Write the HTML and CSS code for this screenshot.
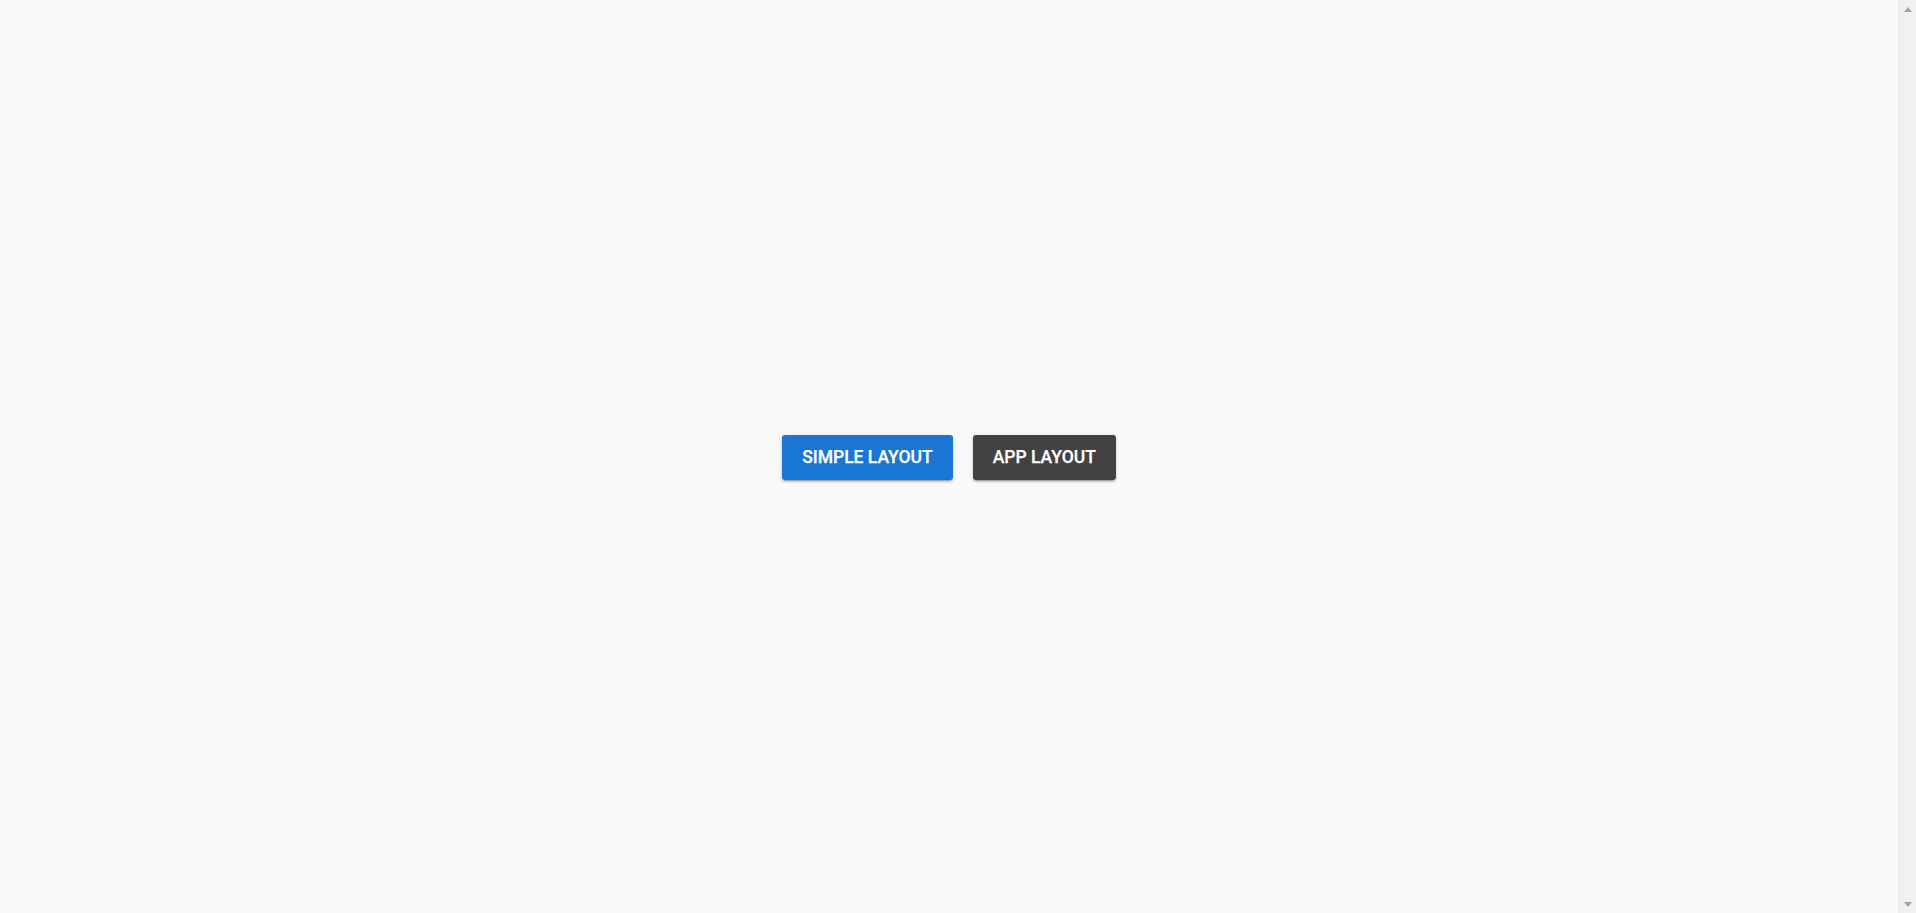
FILE: index.html
```html
<!DOCTYPE html>
<html lang="en">
<head>
<meta charset="utf-8">
<title>Layouts</title>
<link rel="stylesheet" href="styles.css">
</head>
<body>
<div class="window">
  <main class="page">
    <div class="actions">
      <button class="btn btn-primary" type="button">Simple Layout</button>
      <button class="btn btn-dark" type="button">App Layout</button>
    </div>
  </main>
  <div class="scrollbar" aria-hidden="true">
    <span class="arrow arrow-up"></span>
    <span class="arrow arrow-down"></span>
  </div>
</div>
</body>
</html>
```
FILE: styles.css
```css
body {
  margin: 0;
  background: #fafafa;
  font-family: Roboto, "Noto Sans", "Liberation Sans", sans-serif;
  overflow: hidden;
}
.window {
  display: flex;
  height: 913px;
}
.page {
  flex: 1;
  display: flex;
  align-items: center;
  justify-content: center;
}
.actions {
  display: flex;
  gap: 20px;
  margin-top: 1px;
}
.btn {
  height: 45px;
  padding: 0 20px;
  border: 0;
  border-radius: 3px;
  font-family: Roboto, "Noto Sans", "Liberation Sans", sans-serif;
  font-weight: 500;
  font-size: 17.5px;
  letter-spacing: 0;
  text-transform: uppercase;
  color: #fff;
  cursor: pointer;
  -webkit-text-stroke: 0.25px #fff;
  box-shadow: 0 3px 1px -2px rgba(0,0,0,.2), 0 2px 2px 0 rgba(0,0,0,.14), 0 1px 5px 0 rgba(0,0,0,.12);
}
.btn-primary {
  background: #1976d2;
}
.btn-dark {
  background: #424242;
}
.scrollbar {
  width: 18px;
  background: #f1f1f1;
  border-left: 1px solid #ededed;
  box-sizing: border-box;
  display: flex;
  flex-direction: column;
  justify-content: space-between;
  align-items: center;
  padding: 7px 0 6px 1px;
}
.arrow {
  width: 0;
  height: 0;
  border-left: 4.5px solid transparent;
  border-right: 4.5px solid transparent;
}
.arrow-up {
  border-bottom: 5px solid #a3a3a3;
}
.arrow-down {
  border-top: 5px solid #a3a3a3;
}
```
